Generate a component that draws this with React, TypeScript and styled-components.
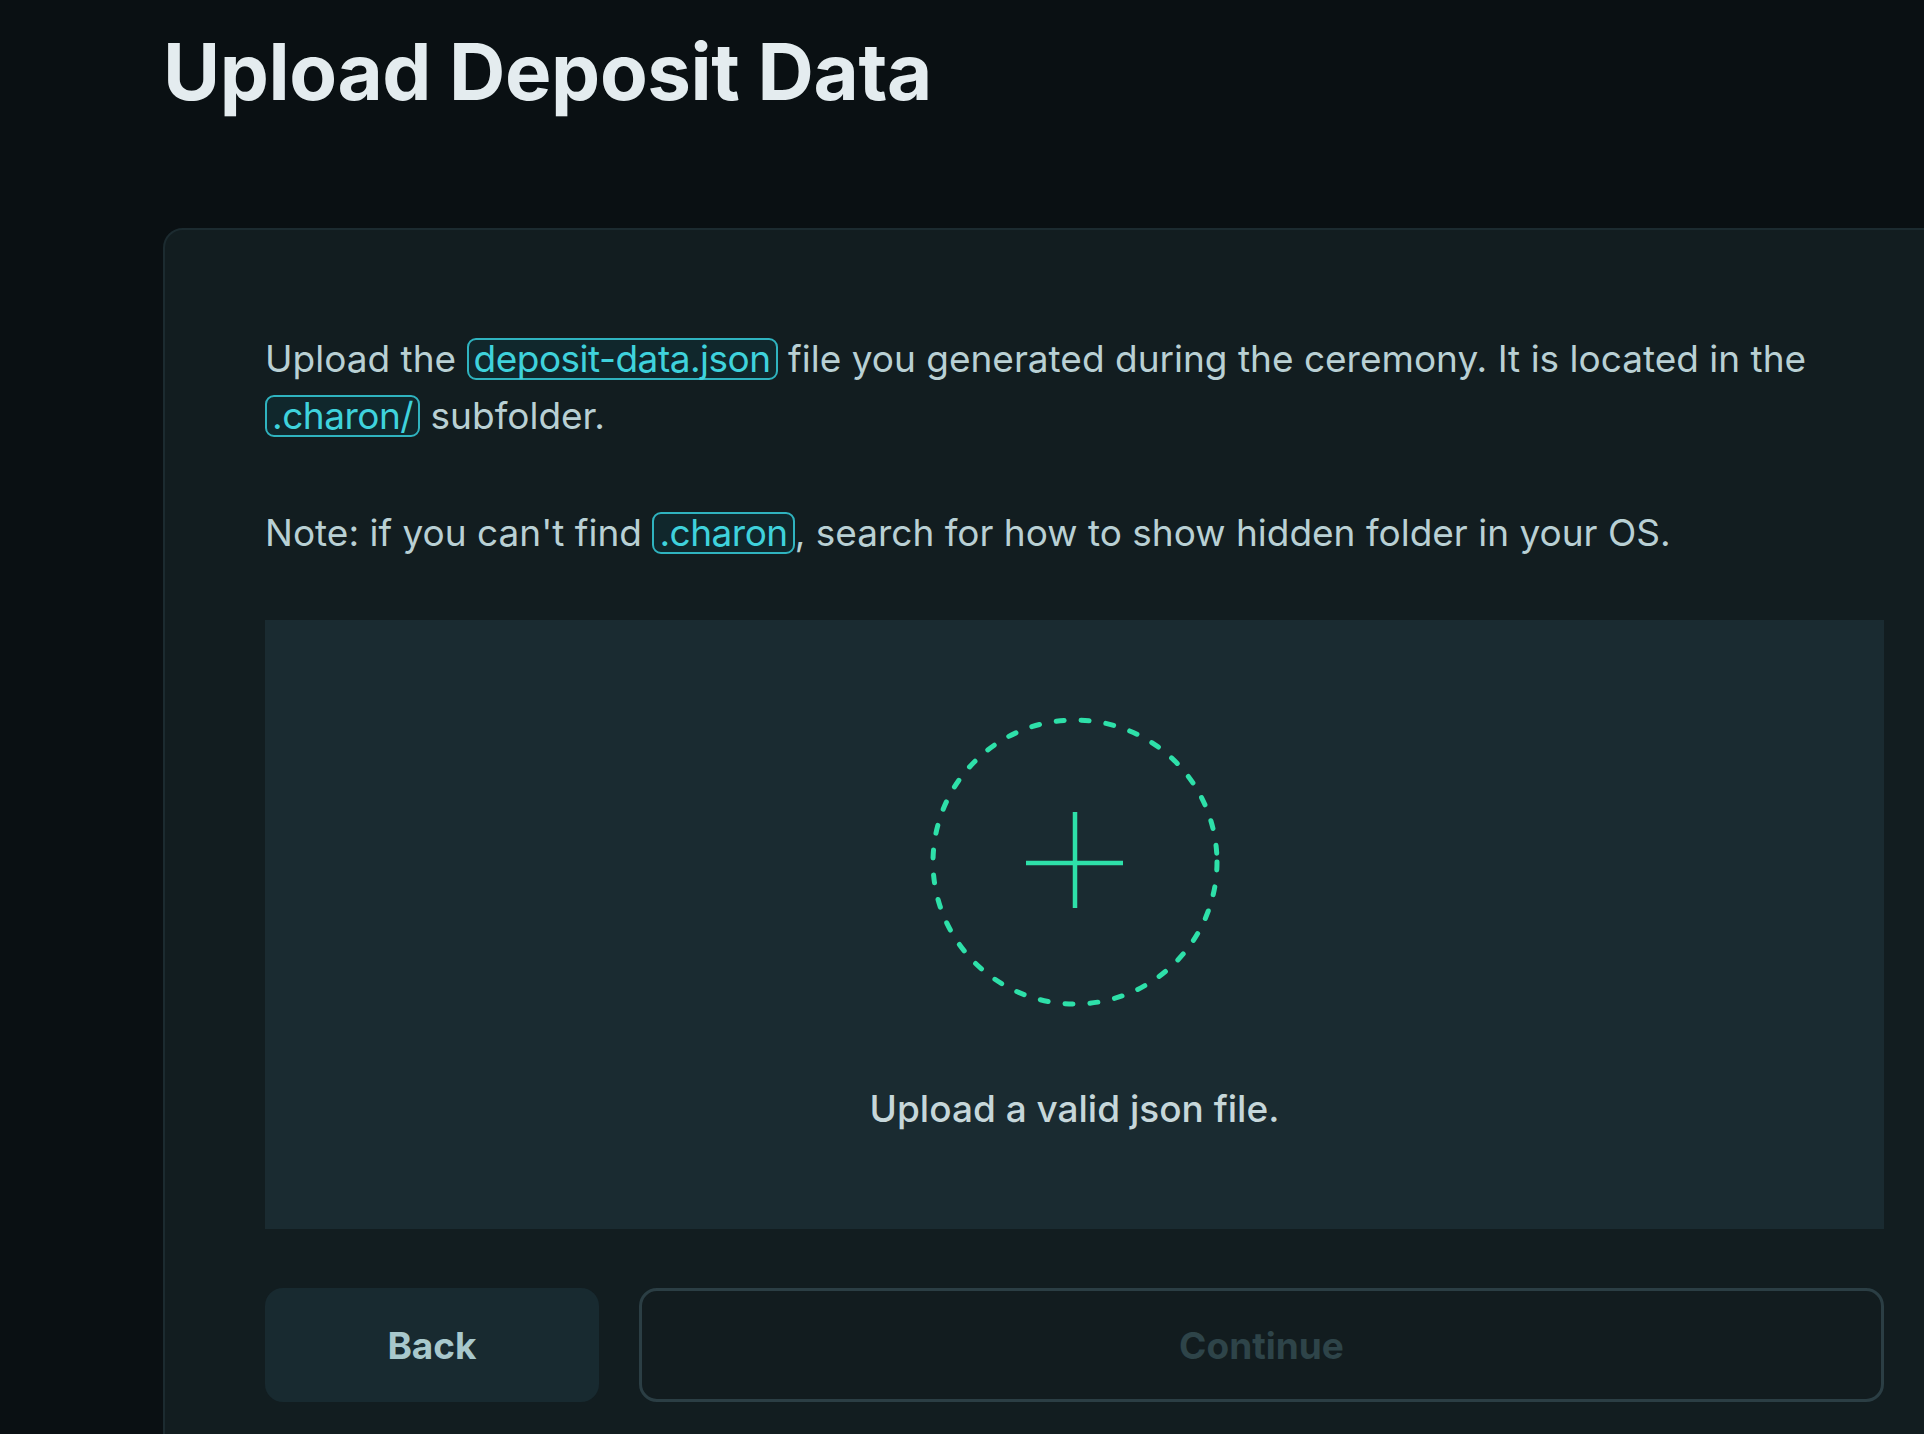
import * as React from 'react'
import styled, { createGlobalStyle } from 'styled-components'

const GlobalStyle = createGlobalStyle`
  html, body {
    margin: 0;
    padding: 0;
    background: #0a1013;
    overflow: hidden;
  }
  body {
    font-family: Inter, "Noto Sans", sans-serif;
  }
`

const Page = styled.div`
  min-height: 1434px;
  padding: 33px 0 0 163px;
  box-sizing: border-box;
  background: #0a1013;
`

const Title = styled.h1`
  margin: 0 0 117px;
  font-size: 78px;
  line-height: 78px;
  font-weight: 700;
  letter-spacing: -0.4px;
  color: #e4ecef;
`

const Card = styled.section`
  width: 1823px;
  box-sizing: border-box;
  padding: 100px 100px 120px;
  background: #121d20;
  border: 2px solid #1c2b30;
  border-radius: 20px;
  display: flex;
  flex-direction: column;
`

const Paragraph = styled.p<{ gap?: number }>`
  margin: 0 0 ${p => p.gap ?? 0}px;
  font-size: 37px;
  line-height: 57px;
  font-weight: 400;
  color: #b9d0d4;
`

const Code = styled.span`
  display: inline-block;
  padding: 0 5px;
  line-height: 38px;
  letter-spacing: -0.5px;
  border: 2px solid #2fb3bf;
  border-radius: 9px;
  background: #10272c;
  color: #3fd2dc;
`

const DropZone = styled.div`
  height: 609px;
  background: #1a2b31;
  display: flex;
  flex-direction: column;
  align-items: center;
  padding-top: 96px;
  box-sizing: border-box;
  cursor: pointer;
`

const DropHint = styled.div`
  margin-top: 78px;
  font-size: 37px;
  font-weight: 500;
  color: #c6d7da;
`

const ButtonRow = styled.div`
  display: flex;
  gap: 40px;
  margin-top: 59px;
`

const Button = styled.button<{ variant: 'secondary' | 'outline' }>`
  height: 114px;
  box-sizing: border-box;
  border-radius: 18px;
  font-family: inherit;
  font-size: 37px;
  font-weight: 700;
  cursor: pointer;
  ${p => p.variant === 'secondary'
    ? `
      width: 334px;
      flex: none;
      background: #182a30;
      border: none;
      color: #a8c8cc;
    `
    : `
      flex: 1;
      background: #121c1f;
      border: 3px solid #2b3e44;
      color: #2e4449;
      cursor: not-allowed;
    `}
`

const UploadIcon = () =>
  <svg width="292" height="292" viewBox="0 0 292 292">
    <circle cx="146" cy="146" r="142" fill="none" stroke="#2ee0a9"
      strokeWidth="5" strokeDasharray="8 17" strokeLinecap="round" />
    <line x1="97" y1="147" x2="194" y2="147" stroke="#2ee0a9" strokeWidth="4.5" />
    <line x1="146" y1="96" x2="146" y2="192" stroke="#2ee0a9" strokeWidth="4.5" />
  </svg>

export default function App() {
  return (
    <>
      <GlobalStyle />
      <Page>
        <Title>Upload Deposit Data</Title>
        <Card>
          <Paragraph gap={60}>
            Upload the <Code>deposit-data.json</Code> file you generated during the ceremony. It is located in the{' '}
            <Code>.charon/</Code> subfolder.
          </Paragraph>
          <Paragraph gap={59}>
            Note: if you can't find <Code>.charon</Code>, search for how to show hidden folder in your OS.
          </Paragraph>
          <DropZone>
            <UploadIcon />
            <DropHint>Upload a valid json file.</DropHint>
          </DropZone>
          <ButtonRow>
            <Button variant="secondary">Back</Button>
            <Button variant="outline" disabled>Continue</Button>
          </ButtonRow>
        </Card>
      </Page>
    </>
  )
}
